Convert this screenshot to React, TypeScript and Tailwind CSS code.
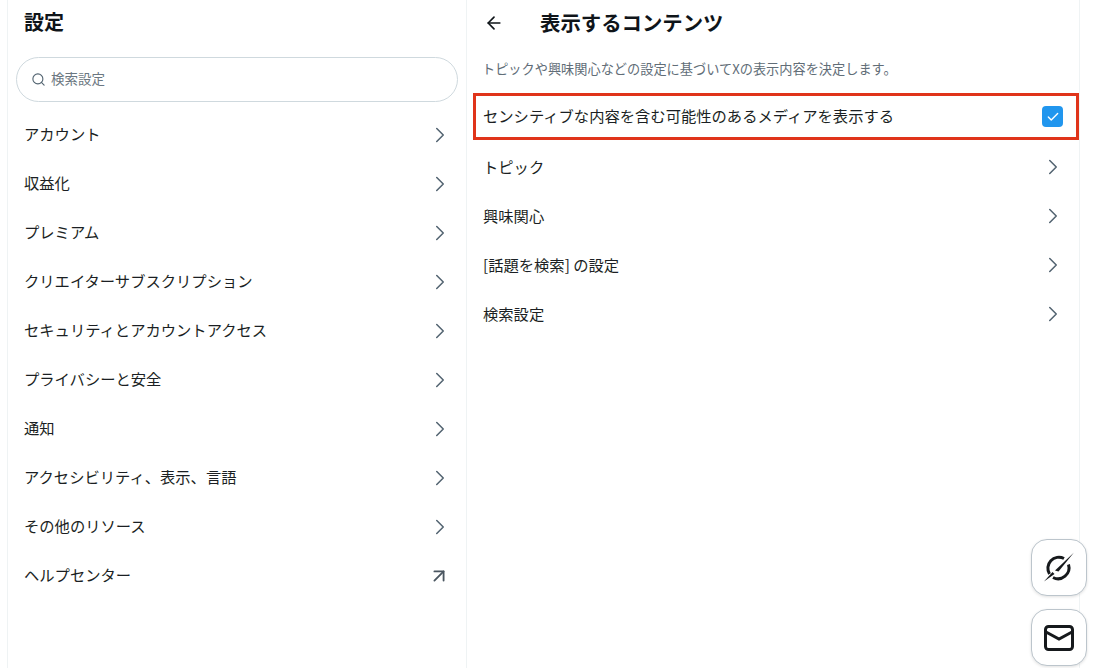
import React from 'react';
import { ArrowLeft, ArrowUpRight, Check, ChevronRight, Search } from 'lucide-react';

const font = "font-['Noto_Sans_CJK_JP','Noto_Sans',sans-serif]";

const menuItems = [
  'アカウント',
  '収益化',
  'プレミアム',
  'クリエイターサブスクリプション',
  'セキュリティとアカウントアクセス',
  'プライバシーと安全',
  '通知',
  'アクセシビリティ、表示、言語',
  'その他のリソース',
];

const contentItems = ['トピック', '興味関心', '[話題を検索] の設定', '検索設定'];

const Row = ({ label, external, raised }: { label: string; external?: boolean; raised?: boolean }) => (
  <div className="flex h-[49px] items-center justify-between pr-[13px] pl-[16px] text-[15.3px] text-[#1b1f23]">
    <span className={raised ? 'pb-[2px]' : ''}>{label}</span>
    {external ? (
      <ArrowUpRight className="mr-[3px] h-[22px] w-[22px] text-[#4a5660]" strokeWidth={2} />
    ) : (
      <ChevronRight className="h-[26px] w-[26px] text-[#536471]" strokeWidth={1.4} />
    )}
  </div>
);

const GrokIcon = () => (
  <svg viewBox="0 0 32 32" className="h-[32px] w-[32px] text-[#16191c]" fill="none">
    <path d="M21 6.5A11 11 0 0 0 6.5 22" stroke="currentColor" strokeWidth="3" />
    <path d="M25.5 12.5A11 11 0 0 1 10 25.5" stroke="currentColor" strokeWidth="3" />
    <path d="M31 0.5 L12 18.5 L15.5 19.5 Z" fill="currentColor" />
    <path d="M1 29.5 L9.5 20 L11.5 22 Z" fill="currentColor" />
  </svg>
);

const MailIcon = () => (
  <svg viewBox="0 0 32 32" className="h-[32px] w-[32px] text-[#16191c]" fill="none" stroke="currentColor" strokeWidth="3">
    <rect x="2.5" y="4.5" width="27" height="23" rx="3" />
    <path d="M3 10 L16 17 L29 10" />
  </svg>
);

const FloatButton = ({ children }: { children: React.ReactNode }) => (
  <div className="flex h-[57px] w-[56px] items-center justify-center rounded-[16px] border border-[#bcc5cc] bg-white shadow-[0_1px_3px_rgba(0,0,0,0.12)]">
    {children}
  </div>
);

export default function App() {
  return (
    <div className={`relative flex h-[668px] w-[1100px] overflow-hidden bg-white pl-[7px] ${font}`}>
      <div className="w-[460px] border-x border-[#eff3f4]">
        <h1 className="flex h-[45px] items-center pb-[2px] pl-[16px] text-[20px] font-bold text-[#0f1419]">設定</h1>
        <div className="mt-[12px] ml-[8px] flex h-[45px] w-[442px] items-center gap-[5px] rounded-full border border-[#cfd9de] pl-[14px] text-[13.5px] text-[#6b7781]">
          <Search className="h-[15px] w-[15px] text-[#536471]" strokeWidth={1.8} />
          <span className="pb-[2px]">検索設定</span>
        </div>
        <div className="mt-[8px]">
          {menuItems.map((item) => (
            <Row key={item} label={item} raised />
          ))}
          <Row label="ヘルプセンター" external raised />
        </div>
      </div>

      <div className="w-[613px] border-r border-[#eff3f4]">
        <div className="flex h-[45px] items-center pl-[17px]">
          <ArrowLeft className="h-[20px] w-[20px] text-[#0f1419]" strokeWidth={2} />
          <h2 className="ml-[36px] text-[20.4px] font-bold text-[#0f1419]">表示するコンテンツ</h2>
        </div>
        <p className="mt-[14px] pl-[15px] text-[13.2px] leading-[20px] text-[#616d77]">
          トピックや興味関心などの設定に基づいてXの表示内容を決定します。
        </p>
        <div className="mt-[14px] ml-[6px] flex h-[47px] w-[606px] items-center justify-between border-[3px] border-[#e0341a] pr-[13px] pl-[7px] text-[15.3px] text-[#1b1f23]">
          <span className="pb-[2px]">センシティブな内容を含む可能性のあるメディアを表示する</span>
          <div className="flex h-[21px] w-[21px] items-center justify-center rounded-[4px] bg-[#2196ee]">
            <Check className="h-[14px] w-[14px] text-white" strokeWidth={2.4} />
          </div>
        </div>
        <div className="mt-[2px]">
          {contentItems.map((item) => (
            <Row key={item} label={item} />
          ))}
        </div>
      </div>

      <div className="absolute top-[539px] left-[1031px] flex flex-col gap-[13px]">
        <FloatButton>
          <GrokIcon />
        </FloatButton>
        <FloatButton>
          <MailIcon />
        </FloatButton>
      </div>
    </div>
  );
}
